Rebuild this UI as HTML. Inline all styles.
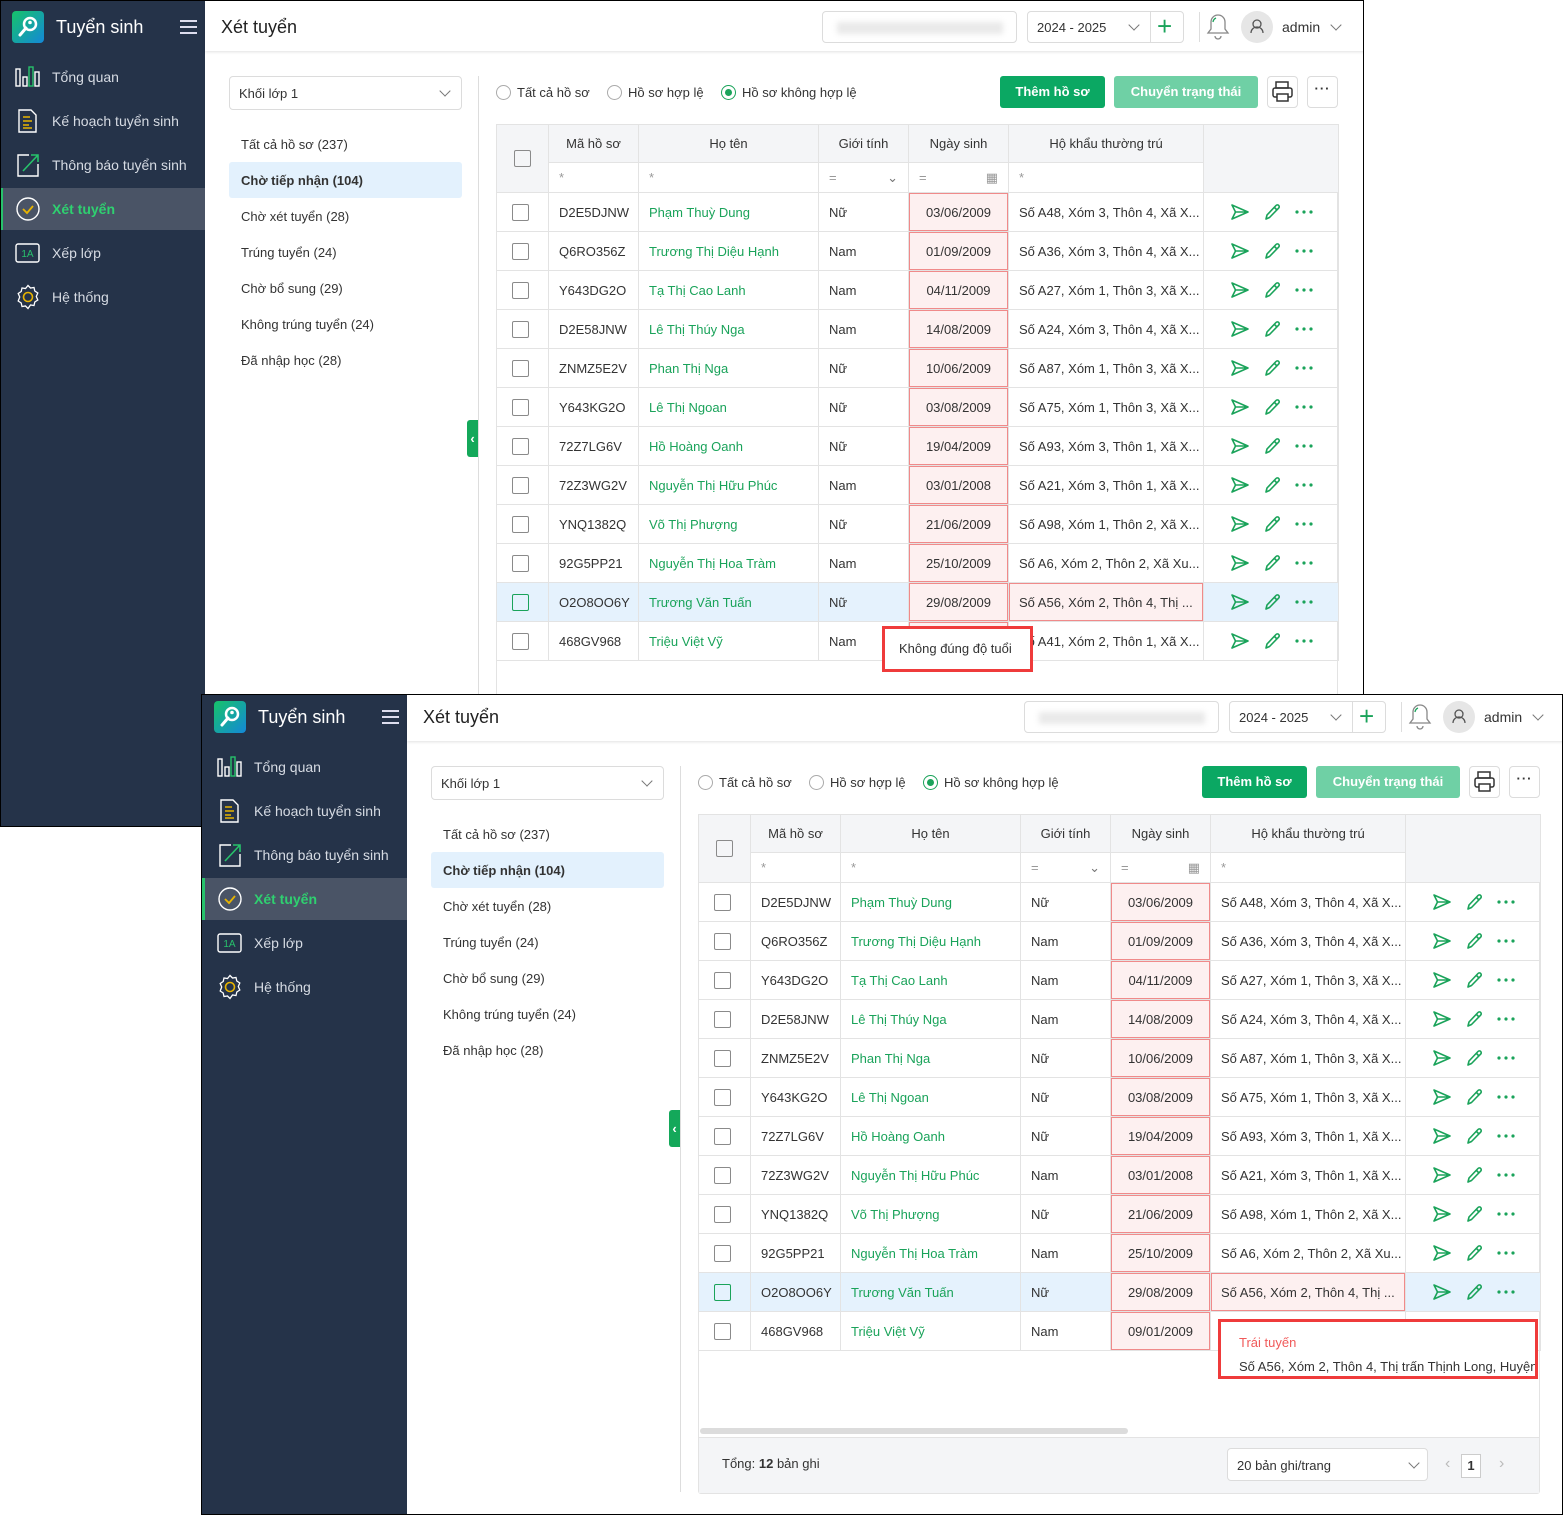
<!DOCTYPE html>
<html><head><meta charset="utf-8">
<style>
*{box-sizing:border-box;margin:0;padding:0}
body{width:1563px;height:1515px;background:#fff;position:relative;overflow:hidden;font-family:"Liberation Sans","DejaVu Sans",sans-serif;color:#333;font-size:13px}
.frame{position:absolute;border:1px solid #000;overflow:hidden;background:#fff}
.app{position:absolute;left:0;width:1362px;height:830px}
.abs{position:absolute}
.side{position:absolute;left:0;top:0;width:205px;height:900px;background:#253349}
.logo{position:absolute;left:12px;top:11px;width:32px;height:32px;border-radius:4px;background:linear-gradient(135deg,#16c36a,#1488d8)}
.brand{position:absolute;left:56px;top:17px;color:#fff;font-size:18px}
.hamb{position:absolute;left:180px;top:20px;width:17px;height:2px;background:#dde;box-shadow:0 6px 0 #dde,0 12px 0 #dde}
.mi{position:absolute;left:0;width:205px;height:42px;color:#d6dbe3;font-size:14px}
.mi span{position:absolute;left:52px;top:13px}
.mi svg{position:absolute;left:15px;top:8px}
.mi.act{background:#4a5466;border-left:3px solid #27c26b}
.mi.act span{color:#2fd070;font-weight:bold;left:49px}
.mi.act svg{left:12px}
.hdr{position:absolute;left:205px;top:0;width:1160px;height:51px;background:#fff;box-shadow:0 1px 3px rgba(0,0,0,.12)}
.title{position:absolute;left:221px;top:17px;font-size:18px;color:#222}
.box{position:absolute;border:1px solid #dcdcdc;border-radius:4px;background:#fff}
.chev{position:absolute;width:8px;height:8px;border-right:1.5px solid #777;border-bottom:1.5px solid #777;transform:rotate(45deg)}
.li{position:absolute;left:241px;font-size:13px;color:#333}
.radio{position:absolute;width:15px;height:15px;border:1px solid #aaa;border-radius:50%;top:85px}
.rl{position:absolute;top:85px;font-size:13px}
.btn{position:absolute;top:76px;height:32px;border-radius:3px;color:#fff;font-weight:bold;font-size:13px;text-align:center;line-height:32px}
.tc{position:absolute;left:496px;top:124px;width:842px;height:720px;border:1px solid #e3e3e3}
table{position:absolute;left:496px;top:124px;border-collapse:collapse;table-layout:fixed;width:842px}
td,th{border:1px solid #e3e3e3;height:39px;padding:0 10px;white-space:nowrap;overflow:hidden;font-size:13px;font-weight:normal;text-align:left}
th{background:#f4f5f7;height:38px;text-align:center;color:#333}
tr.f td{height:30px;color:#999;background:#fff}
.cb{display:inline-block;width:17px;height:17px;border:1px solid #8a8a8a;border-radius:2px;vertical-align:middle;margin-left:5px}
.nm{color:#1aa35a}
.dt{background:#fdf0f0;box-shadow:inset 0 0 0 1px #f08a8a;text-align:center}
tr.sel td{background:#e5f2fd}
tr.sel td.dt{background:#fdf0f0}
tr.sel .cb{border-color:#1aa35a}
td.a{padding-left:26px;font-size:0}
td.a svg{vertical-align:middle;margin-right:12px}
.tip{position:absolute;border:3px solid #ef3b3b;background:#fff;overflow:hidden;white-space:nowrap}
</style></head><body>
<svg width="0" height="0" style="position:absolute">
<defs>
<symbol id="snd" viewBox="0 0 20 18"><path d="M2 2l16 7-16 7 3.5-7z M5.5 9H18" fill="none" stroke="#1aa35a" stroke-width="1.6" stroke-linejoin="round"/></symbol>
<symbol id="pen" viewBox="0 0 20 18"><path d="M4 16l1-4 9-9.5a1.8 1.8 0 0 1 2.7 2.6L7.5 14.5z M12.5 4.5l2.5 2.5" fill="none" stroke="#1aa35a" stroke-width="1.6" stroke-linejoin="round"/></symbol>
<symbol id="dts" viewBox="0 0 20 18"><circle cx="3" cy="9" r="1.6" fill="#1aa35a"/><circle cx="10" cy="9" r="1.6" fill="#1aa35a"/><circle cx="17" cy="9" r="1.6" fill="#1aa35a"/></symbol>
</defs></svg>

<!-- APP 1 -->
<div class="frame" style="left:0;top:0;width:1364px;height:827px">
<div class="app" style="top:-1px;left:-1px">
 <div class="side">
  <div class="logo"><svg width="32" height="32" viewBox="0 0 32 32"><circle cx="18" cy="13" r="6" fill="none" stroke="#fff" stroke-width="2.5"/><line x1="14" y1="17" x2="8" y2="24" stroke="#fff" stroke-width="3" stroke-linecap="round"/><circle cx="18" cy="11.5" r="1.8" fill="#fff"/></svg></div>
  <div class="brand">Tuyển sinh</div><div class="hamb"></div>
  <div class="mi" style="top:56px"><svg width="26" height="26"><rect x="1" y="5" width="4" height="17" fill="none" stroke="#fff" stroke-width="1.4"/><rect x="8" y="13" width="4" height="9" fill="none" stroke="#fff" stroke-width="1.4"/><rect x="14" y="3" width="4" height="19" fill="none" stroke="#27c26b" stroke-width="1.4"/><rect x="20" y="8" width="4" height="14" fill="none" stroke="#fff" stroke-width="1.4"/></svg><span>Tổng quan</span></div>
  <div class="mi" style="top:100px"><svg width="26" height="26"><path d="M4 2h12l5 5v17H4z" fill="none" stroke="#fff" stroke-width="1.4"/><path d="M8 9h7M8 13h9M8 17h6M8 20h9" stroke="#e8b400" stroke-width="1.6"/></svg><span>Kế hoạch tuyển sinh</span></div>
  <div class="mi" style="top:144px"><svg width="26" height="26"><path d="M14 3H3v21h20V12" fill="none" stroke="#fff" stroke-width="1.4"/><path d="M8 19L23 3M16 3h7v7" fill="none" stroke="#27c26b" stroke-width="1.6"/></svg><span>Thông báo tuyển sinh</span></div>
  <div class="mi act" style="top:188px"><svg width="26" height="26"><circle cx="13" cy="13" r="11" fill="none" stroke="#fff" stroke-width="1.4"/><path d="M8 13l4 4 6-7" fill="none" stroke="#e8b400" stroke-width="1.8"/></svg><span>Xét tuyển</span></div>
  <div class="mi" style="top:232px"><svg width="26" height="26"><rect x="1" y="4" width="23" height="18" rx="2" fill="none" stroke="#fff" stroke-width="1.4"/><text x="12.5" y="17" fill="#27c26b" font-size="10" text-anchor="middle" font-family="Liberation Sans">1A</text></svg><span>Xếp lớp</span></div>
  <div class="mi" style="top:276px"><svg width="26" height="26"><path d="M13 1.5l2.5 2.5 3.5-.5.8 3.5 3 2-1.5 3.5 1.5 3.5-3 2-.8 3.5-3.5-.5L13 24.5l-2.5-2.5-3.5.5-.8-3.5-3-2L4.7 13 3.2 9.5l3-2L7 4l3.5.5z" fill="none" stroke="#fff" stroke-width="1.3"/><circle cx="13" cy="13" r="4.5" fill="none" stroke="#e8b400" stroke-width="1.6"/></svg><span>Hệ thống</span></div>
 </div>
 <div class="hdr"></div>
 <div class="title">Xét tuyển</div>
 <div class="box" style="left:822px;top:11px;width:195px;height:32px"><div class="abs" style="left:14px;top:10px;width:166px;height:12px;background:#e9e9e9;filter:blur(3px)"></div></div>
 <div class="box" style="left:1027px;top:11px;width:157px;height:32px"><span class="abs" style="left:9px;top:8px">2024 - 2025</span><div class="chev" style="left:102px;top:9px"></div><div class="abs" style="left:122px;top:0;width:1px;height:30px;background:#ddd"></div><span class="abs" style="left:129px;top:-1px;color:#1aa35a;font-size:26px;line-height:30px">+</span></div>
 <div class="abs" style="left:1199px;top:12px;width:1px;height:30px;background:#ddd"></div>
 <svg class="abs" style="left:1206px;top:12px" width="24" height="28"><path d="M12 3a7 7 0 0 0-7 7v7l-3 4h20l-3-4v-7a7 7 0 0 0-7-7z" fill="none" stroke="#888" stroke-width="1.3"/><path d="M9 24a3 3 0 0 0 6 0" fill="none" stroke="#888" stroke-width="1.3"/><path d="M7 10a5 5 0 0 1 3-4" stroke="#1aa35a" stroke-width="1.3" fill="none"/></svg>
 <div class="abs" style="left:1241px;top:11px;width:32px;height:32px;border-radius:50%;background:#e6e6e6"><svg width="32" height="32"><circle cx="16" cy="13" r="4" fill="none" stroke="#555" stroke-width="1.3"/><path d="M10 22a6 6 0 0 1 12 0" fill="none" stroke="#555" stroke-width="1.3"/></svg></div>
 <span class="abs" style="left:1282px;top:19px;font-size:14px">admin</span><div class="chev" style="left:1332px;top:21px"></div>

 <div class="box" style="left:229px;top:76px;width:233px;height:34px"><span class="abs" style="left:9px;top:9px">Khối lớp 1</span><div class="chev" style="left:211px;top:10px"></div></div>
 <div class="abs" style="left:229px;top:162px;width:233px;height:36px;background:#e3f1fd;border-radius:3px"></div>
 <div class="li" style="top:137px">Tất cả hồ sơ (237)</div>
 <div class="li" style="top:173px;font-weight:bold">Chờ tiếp nhận (104)</div>
 <div class="li" style="top:209px">Chờ xét tuyển (28)</div>
 <div class="li" style="top:245px">Trúng tuyển (24)</div>
 <div class="li" style="top:281px">Chờ bổ sung (29)</div>
 <div class="li" style="top:317px">Không trúng tuyển (24)</div>
 <div class="li" style="top:353px">Đã nhập học (28)</div>
 <div class="abs" style="left:478px;top:76px;width:1px;height:760px;background:#ddd"></div>
 <div class="abs" style="left:467px;top:420px;width:11px;height:37px;background:#14a85a;border-radius:3px 0 0 3px;color:#fff;font-size:13px;font-weight:bold;line-height:37px;text-align:center">‹</div>

 <div class="radio" style="left:496px"></div><span class="rl" style="left:517px">Tất cả hồ sơ</span>
 <div class="radio" style="left:607px"></div><span class="rl" style="left:628px">Hồ sơ hợp lệ</span>
 <div class="radio" style="left:721px;border-color:#1aa35a"><div class="abs" style="left:3px;top:3px;width:7px;height:7px;border-radius:50%;background:#1aa35a"></div></div><span class="rl" style="left:742px">Hồ sơ không hợp lệ</span>
 <div class="btn" style="left:1000px;width:105px;background:#0ba863">Thêm hồ sơ</div>
 <div class="btn" style="left:1114px;width:144px;background:#6fd0a5">Chuyển trạng thái</div>
 <div class="box" style="left:1267px;top:76px;width:31px;height:32px"><svg width="29" height="30"><rect x="8" y="5" width="12" height="6" fill="none" stroke="#333" stroke-width="1.5"/><rect x="5" y="11" width="19" height="9" rx="2" fill="none" stroke="#333" stroke-width="1.5"/><rect x="9" y="17" width="11" height="7" fill="#fff" stroke="#333" stroke-width="1.5"/></svg></div>
 <div class="box" style="left:1307px;top:76px;width:31px;height:32px;text-align:center;font-weight:bold;line-height:24px;letter-spacing:1px">···</div>

 <div class="tc"></div>
 <table>
  <colgroup><col style="width:52px"><col style="width:90px"><col style="width:180px"><col style="width:90px"><col style="width:100px"><col style="width:195px"><col style="width:135px"></colgroup>
  <tr><th rowspan="2"><span class="cb" style="margin:0"></span></th><th>Mã hồ sơ</th><th>Họ tên</th><th>Giới tính</th><th>Ngày sinh</th><th>Hộ khẩu thường trú</th><th rowspan="2"></th></tr>
  <tr class="f"><td>*</td><td>*</td><td>=<span style="float:right;color:#777">⌄</span></td><td>=<span style="float:right">▦</span></td><td>*</td></tr>
  <tr><td><span class="cb"></span></td><td>D2E5DJNW</td><td class="nm">Phạm Thuỳ Dung</td><td>Nữ</td><td class="dt">03/06/2009</td><td>Số A48, Xóm 3, Thôn 4, Xã X...</td><td class="a"><svg width="20" height="18"><use href="#snd"/></svg><svg width="20" height="18"><use href="#pen"/></svg><svg width="20" height="18"><use href="#dts"/></svg></td></tr>
  <tr><td><span class="cb"></span></td><td>Q6RO356Z</td><td class="nm">Trương Thị Diệu Hạnh</td><td>Nam</td><td class="dt">01/09/2009</td><td>Số A36, Xóm 3, Thôn 4, Xã X...</td><td class="a"><svg width="20" height="18"><use href="#snd"/></svg><svg width="20" height="18"><use href="#pen"/></svg><svg width="20" height="18"><use href="#dts"/></svg></td></tr>
  <tr><td><span class="cb"></span></td><td>Y643DG2O</td><td class="nm">Tạ Thị Cao Lanh</td><td>Nam</td><td class="dt">04/11/2009</td><td>Số A27, Xóm 1, Thôn 3, Xã X...</td><td class="a"><svg width="20" height="18"><use href="#snd"/></svg><svg width="20" height="18"><use href="#pen"/></svg><svg width="20" height="18"><use href="#dts"/></svg></td></tr>
  <tr><td><span class="cb"></span></td><td>D2E58JNW</td><td class="nm">Lê Thị Thúy Nga</td><td>Nam</td><td class="dt">14/08/2009</td><td>Số A24, Xóm 3, Thôn 4, Xã X...</td><td class="a"><svg width="20" height="18"><use href="#snd"/></svg><svg width="20" height="18"><use href="#pen"/></svg><svg width="20" height="18"><use href="#dts"/></svg></td></tr>
  <tr><td><span class="cb"></span></td><td>ZNMZ5E2V</td><td class="nm">Phan Thị Nga</td><td>Nữ</td><td class="dt">10/06/2009</td><td>Số A87, Xóm 1, Thôn 3, Xã X...</td><td class="a"><svg width="20" height="18"><use href="#snd"/></svg><svg width="20" height="18"><use href="#pen"/></svg><svg width="20" height="18"><use href="#dts"/></svg></td></tr>
  <tr><td><span class="cb"></span></td><td>Y643KG2O</td><td class="nm">Lê Thị Ngoan</td><td>Nữ</td><td class="dt">03/08/2009</td><td>Số A75, Xóm 1, Thôn 3, Xã X...</td><td class="a"><svg width="20" height="18"><use href="#snd"/></svg><svg width="20" height="18"><use href="#pen"/></svg><svg width="20" height="18"><use href="#dts"/></svg></td></tr>
  <tr><td><span class="cb"></span></td><td>72Z7LG6V</td><td class="nm">Hồ Hoàng Oanh</td><td>Nữ</td><td class="dt">19/04/2009</td><td>Số A93, Xóm 3, Thôn 1, Xã X...</td><td class="a"><svg width="20" height="18"><use href="#snd"/></svg><svg width="20" height="18"><use href="#pen"/></svg><svg width="20" height="18"><use href="#dts"/></svg></td></tr>
  <tr><td><span class="cb"></span></td><td>72Z3WG2V</td><td class="nm">Nguyễn Thị Hữu Phúc</td><td>Nam</td><td class="dt">03/01/2008</td><td>Số A21, Xóm 3, Thôn 1, Xã X...</td><td class="a"><svg width="20" height="18"><use href="#snd"/></svg><svg width="20" height="18"><use href="#pen"/></svg><svg width="20" height="18"><use href="#dts"/></svg></td></tr>
  <tr><td><span class="cb"></span></td><td>YNQ1382Q</td><td class="nm">Võ Thị Phượng</td><td>Nữ</td><td class="dt">21/06/2009</td><td>Số A98, Xóm 1, Thôn 2, Xã X...</td><td class="a"><svg width="20" height="18"><use href="#snd"/></svg><svg width="20" height="18"><use href="#pen"/></svg><svg width="20" height="18"><use href="#dts"/></svg></td></tr>
  <tr><td><span class="cb"></span></td><td>92G5PP21</td><td class="nm">Nguyễn Thị Hoa Tràm</td><td>Nam</td><td class="dt">25/10/2009</td><td>Số A6, Xóm 2, Thôn 2, Xã Xu...</td><td class="a"><svg width="20" height="18"><use href="#snd"/></svg><svg width="20" height="18"><use href="#pen"/></svg><svg width="20" height="18"><use href="#dts"/></svg></td></tr>
  <tr class="sel"><td><span class="cb"></span></td><td>O2O8OO6Y</td><td class="nm">Trương Văn Tuấn</td><td>Nữ</td><td class="dt">29/08/2009</td><td class="dt" style="text-align:left">Số A56, Xóm 2, Thôn 4, Thị ...</td><td class="a"><svg width="20" height="18"><use href="#snd"/></svg><svg width="20" height="18"><use href="#pen"/></svg><svg width="20" height="18"><use href="#dts"/></svg></td></tr>
  <tr><td><span class="cb"></span></td><td>468GV968</td><td class="nm">Triệu Việt Vỹ</td><td>Nam</td><td class="dt">09/01/2009</td><td>Số A41, Xóm 2, Thôn 1, Xã X...</td><td class="a"><svg width="20" height="18"><use href="#snd"/></svg><svg width="20" height="18"><use href="#pen"/></svg><svg width="20" height="18"><use href="#dts"/></svg></td></tr>
 </table>
 <div class="tip" style="left:882px;top:626px;width:151px;height:46px;padding:12px 0 0 14px">Không đúng độ tuổi</div>
</div></div>

<!-- APP 2 -->
<div class="frame" style="left:201px;top:694px;width:1362px;height:821px">
<div class="app" style="top:-5px;left:0">
 <div class="side">
  <div class="logo"><svg width="32" height="32" viewBox="0 0 32 32"><circle cx="18" cy="13" r="6" fill="none" stroke="#fff" stroke-width="2.5"/><line x1="14" y1="17" x2="8" y2="24" stroke="#fff" stroke-width="3" stroke-linecap="round"/><circle cx="18" cy="11.5" r="1.8" fill="#fff"/></svg></div>
  <div class="brand">Tuyển sinh</div><div class="hamb"></div>
  <div class="mi" style="top:56px"><svg width="26" height="26"><rect x="1" y="5" width="4" height="17" fill="none" stroke="#fff" stroke-width="1.4"/><rect x="8" y="13" width="4" height="9" fill="none" stroke="#fff" stroke-width="1.4"/><rect x="14" y="3" width="4" height="19" fill="none" stroke="#27c26b" stroke-width="1.4"/><rect x="20" y="8" width="4" height="14" fill="none" stroke="#fff" stroke-width="1.4"/></svg><span>Tổng quan</span></div>
  <div class="mi" style="top:100px"><svg width="26" height="26"><path d="M4 2h12l5 5v17H4z" fill="none" stroke="#fff" stroke-width="1.4"/><path d="M8 9h7M8 13h9M8 17h6M8 20h9" stroke="#e8b400" stroke-width="1.6"/></svg><span>Kế hoạch tuyển sinh</span></div>
  <div class="mi" style="top:144px"><svg width="26" height="26"><path d="M14 3H3v21h20V12" fill="none" stroke="#fff" stroke-width="1.4"/><path d="M8 19L23 3M16 3h7v7" fill="none" stroke="#27c26b" stroke-width="1.6"/></svg><span>Thông báo tuyển sinh</span></div>
  <div class="mi act" style="top:188px"><svg width="26" height="26"><circle cx="13" cy="13" r="11" fill="none" stroke="#fff" stroke-width="1.4"/><path d="M8 13l4 4 6-7" fill="none" stroke="#e8b400" stroke-width="1.8"/></svg><span>Xét tuyển</span></div>
  <div class="mi" style="top:232px"><svg width="26" height="26"><rect x="1" y="4" width="23" height="18" rx="2" fill="none" stroke="#fff" stroke-width="1.4"/><text x="12.5" y="17" fill="#27c26b" font-size="10" text-anchor="middle" font-family="Liberation Sans">1A</text></svg><span>Xếp lớp</span></div>
  <div class="mi" style="top:276px"><svg width="26" height="26"><path d="M13 1.5l2.5 2.5 3.5-.5.8 3.5 3 2-1.5 3.5 1.5 3.5-3 2-.8 3.5-3.5-.5L13 24.5l-2.5-2.5-3.5.5-.8-3.5-3-2L4.7 13 3.2 9.5l3-2L7 4l3.5.5z" fill="none" stroke="#fff" stroke-width="1.3"/><circle cx="13" cy="13" r="4.5" fill="none" stroke="#e8b400" stroke-width="1.6"/></svg><span>Hệ thống</span></div>
 </div>
 <div class="hdr"></div>
 <div class="title">Xét tuyển</div>
 <div class="box" style="left:822px;top:11px;width:195px;height:32px"><div class="abs" style="left:14px;top:10px;width:166px;height:12px;background:#e9e9e9;filter:blur(3px)"></div></div>
 <div class="box" style="left:1027px;top:11px;width:157px;height:32px"><span class="abs" style="left:9px;top:8px">2024 - 2025</span><div class="chev" style="left:102px;top:9px"></div><div class="abs" style="left:122px;top:0;width:1px;height:30px;background:#ddd"></div><span class="abs" style="left:129px;top:-1px;color:#1aa35a;font-size:26px;line-height:30px">+</span></div>
 <div class="abs" style="left:1199px;top:12px;width:1px;height:30px;background:#ddd"></div>
 <svg class="abs" style="left:1206px;top:12px" width="24" height="28"><path d="M12 3a7 7 0 0 0-7 7v7l-3 4h20l-3-4v-7a7 7 0 0 0-7-7z" fill="none" stroke="#888" stroke-width="1.3"/><path d="M9 24a3 3 0 0 0 6 0" fill="none" stroke="#888" stroke-width="1.3"/><path d="M7 10a5 5 0 0 1 3-4" stroke="#1aa35a" stroke-width="1.3" fill="none"/></svg>
 <div class="abs" style="left:1241px;top:11px;width:32px;height:32px;border-radius:50%;background:#e6e6e6"><svg width="32" height="32"><circle cx="16" cy="13" r="4" fill="none" stroke="#555" stroke-width="1.3"/><path d="M10 22a6 6 0 0 1 12 0" fill="none" stroke="#555" stroke-width="1.3"/></svg></div>
 <span class="abs" style="left:1282px;top:19px;font-size:14px">admin</span><div class="chev" style="left:1332px;top:21px"></div>

 <div class="box" style="left:229px;top:76px;width:233px;height:34px"><span class="abs" style="left:9px;top:9px">Khối lớp 1</span><div class="chev" style="left:211px;top:10px"></div></div>
 <div class="abs" style="left:229px;top:162px;width:233px;height:36px;background:#e3f1fd;border-radius:3px"></div>
 <div class="li" style="top:137px">Tất cả hồ sơ (237)</div>
 <div class="li" style="top:173px;font-weight:bold">Chờ tiếp nhận (104)</div>
 <div class="li" style="top:209px">Chờ xét tuyển (28)</div>
 <div class="li" style="top:245px">Trúng tuyển (24)</div>
 <div class="li" style="top:281px">Chờ bổ sung (29)</div>
 <div class="li" style="top:317px">Không trúng tuyển (24)</div>
 <div class="li" style="top:353px">Đã nhập học (28)</div>
 <div class="abs" style="left:478px;top:76px;width:1px;height:726px;background:#ddd"></div>
 <div class="abs" style="left:467px;top:420px;width:11px;height:37px;background:#14a85a;border-radius:3px 0 0 3px;color:#fff;font-size:13px;font-weight:bold;line-height:37px;text-align:center">‹</div>

 <div class="radio" style="left:496px"></div><span class="rl" style="left:517px">Tất cả hồ sơ</span>
 <div class="radio" style="left:607px"></div><span class="rl" style="left:628px">Hồ sơ hợp lệ</span>
 <div class="radio" style="left:721px;border-color:#1aa35a"><div class="abs" style="left:3px;top:3px;width:7px;height:7px;border-radius:50%;background:#1aa35a"></div></div><span class="rl" style="left:742px">Hồ sơ không hợp lệ</span>
 <div class="btn" style="left:1000px;width:105px;background:#0ba863">Thêm hồ sơ</div>
 <div class="btn" style="left:1114px;width:144px;background:#6fd0a5">Chuyển trạng thái</div>
 <div class="box" style="left:1267px;top:76px;width:31px;height:32px"><svg width="29" height="30"><rect x="8" y="5" width="12" height="6" fill="none" stroke="#333" stroke-width="1.5"/><rect x="5" y="11" width="19" height="9" rx="2" fill="none" stroke="#333" stroke-width="1.5"/><rect x="9" y="17" width="11" height="7" fill="#fff" stroke="#333" stroke-width="1.5"/></svg></div>
 <div class="box" style="left:1307px;top:76px;width:31px;height:32px;text-align:center;font-weight:bold;line-height:24px;letter-spacing:1px">···</div>

 <div class="tc" style="height:680px;border-radius:3px"></div>
 <div class="abs" style="left:498px;top:738px;width:428px;height:6px;border-radius:3px;background:#dcdcdc"></div>
 <div class="abs" style="left:497px;top:747px;width:840px;height:56px;background:#f4f5f7;border-top:1px solid #e3e3e3"></div>
 <div class="abs" style="left:520px;top:766px">Tổng: <b>12</b> bản ghi</div>
 <div class="box" style="left:1025px;top:758px;width:201px;height:33px"><span class="abs" style="left:9px;top:9px">20 bản ghi/trang</span><div class="chev" style="left:182px;top:10px"></div></div>
 <div class="abs" style="left:1243px;top:765px;color:#bbb;font-size:16px">‹</div>
 <div class="abs" style="left:1259px;top:764px;width:20px;height:24px;border:1px solid #ccc;background:#fff;text-align:center;line-height:22px;font-weight:bold">1</div>
 <div class="abs" style="left:1297px;top:765px;color:#bbb;font-size:16px">›</div>

 <table>
  <colgroup><col style="width:52px"><col style="width:90px"><col style="width:180px"><col style="width:90px"><col style="width:100px"><col style="width:195px"><col style="width:135px"></colgroup>
  <tr><th rowspan="2"><span class="cb" style="margin:0"></span></th><th>Mã hồ sơ</th><th>Họ tên</th><th>Giới tính</th><th>Ngày sinh</th><th>Hộ khẩu thường trú</th><th rowspan="2"></th></tr>
  <tr class="f"><td>*</td><td>*</td><td>=<span style="float:right;color:#777">⌄</span></td><td>=<span style="float:right">▦</span></td><td>*</td></tr>
  <tr><td><span class="cb"></span></td><td>D2E5DJNW</td><td class="nm">Phạm Thuỳ Dung</td><td>Nữ</td><td class="dt">03/06/2009</td><td>Số A48, Xóm 3, Thôn 4, Xã X...</td><td class="a"><svg width="20" height="18"><use href="#snd"/></svg><svg width="20" height="18"><use href="#pen"/></svg><svg width="20" height="18"><use href="#dts"/></svg></td></tr>
  <tr><td><span class="cb"></span></td><td>Q6RO356Z</td><td class="nm">Trương Thị Diệu Hạnh</td><td>Nam</td><td class="dt">01/09/2009</td><td>Số A36, Xóm 3, Thôn 4, Xã X...</td><td class="a"><svg width="20" height="18"><use href="#snd"/></svg><svg width="20" height="18"><use href="#pen"/></svg><svg width="20" height="18"><use href="#dts"/></svg></td></tr>
  <tr><td><span class="cb"></span></td><td>Y643DG2O</td><td class="nm">Tạ Thị Cao Lanh</td><td>Nam</td><td class="dt">04/11/2009</td><td>Số A27, Xóm 1, Thôn 3, Xã X...</td><td class="a"><svg width="20" height="18"><use href="#snd"/></svg><svg width="20" height="18"><use href="#pen"/></svg><svg width="20" height="18"><use href="#dts"/></svg></td></tr>
  <tr><td><span class="cb"></span></td><td>D2E58JNW</td><td class="nm">Lê Thị Thúy Nga</td><td>Nam</td><td class="dt">14/08/2009</td><td>Số A24, Xóm 3, Thôn 4, Xã X...</td><td class="a"><svg width="20" height="18"><use href="#snd"/></svg><svg width="20" height="18"><use href="#pen"/></svg><svg width="20" height="18"><use href="#dts"/></svg></td></tr>
  <tr><td><span class="cb"></span></td><td>ZNMZ5E2V</td><td class="nm">Phan Thị Nga</td><td>Nữ</td><td class="dt">10/06/2009</td><td>Số A87, Xóm 1, Thôn 3, Xã X...</td><td class="a"><svg width="20" height="18"><use href="#snd"/></svg><svg width="20" height="18"><use href="#pen"/></svg><svg width="20" height="18"><use href="#dts"/></svg></td></tr>
  <tr><td><span class="cb"></span></td><td>Y643KG2O</td><td class="nm">Lê Thị Ngoan</td><td>Nữ</td><td class="dt">03/08/2009</td><td>Số A75, Xóm 1, Thôn 3, Xã X...</td><td class="a"><svg width="20" height="18"><use href="#snd"/></svg><svg width="20" height="18"><use href="#pen"/></svg><svg width="20" height="18"><use href="#dts"/></svg></td></tr>
  <tr><td><span class="cb"></span></td><td>72Z7LG6V</td><td class="nm">Hồ Hoàng Oanh</td><td>Nữ</td><td class="dt">19/04/2009</td><td>Số A93, Xóm 3, Thôn 1, Xã X...</td><td class="a"><svg width="20" height="18"><use href="#snd"/></svg><svg width="20" height="18"><use href="#pen"/></svg><svg width="20" height="18"><use href="#dts"/></svg></td></tr>
  <tr><td><span class="cb"></span></td><td>72Z3WG2V</td><td class="nm">Nguyễn Thị Hữu Phúc</td><td>Nam</td><td class="dt">03/01/2008</td><td>Số A21, Xóm 3, Thôn 1, Xã X...</td><td class="a"><svg width="20" height="18"><use href="#snd"/></svg><svg width="20" height="18"><use href="#pen"/></svg><svg width="20" height="18"><use href="#dts"/></svg></td></tr>
  <tr><td><span class="cb"></span></td><td>YNQ1382Q</td><td class="nm">Võ Thị Phượng</td><td>Nữ</td><td class="dt">21/06/2009</td><td>Số A98, Xóm 1, Thôn 2, Xã X...</td><td class="a"><svg width="20" height="18"><use href="#snd"/></svg><svg width="20" height="18"><use href="#pen"/></svg><svg width="20" height="18"><use href="#dts"/></svg></td></tr>
  <tr><td><span class="cb"></span></td><td>92G5PP21</td><td class="nm">Nguyễn Thị Hoa Tràm</td><td>Nam</td><td class="dt">25/10/2009</td><td>Số A6, Xóm 2, Thôn 2, Xã Xu...</td><td class="a"><svg width="20" height="18"><use href="#snd"/></svg><svg width="20" height="18"><use href="#pen"/></svg><svg width="20" height="18"><use href="#dts"/></svg></td></tr>
  <tr class="sel"><td><span class="cb"></span></td><td>O2O8OO6Y</td><td class="nm">Trương Văn Tuấn</td><td>Nữ</td><td class="dt">29/08/2009</td><td class="dt" style="text-align:left">Số A56, Xóm 2, Thôn 4, Thị ...</td><td class="a"><svg width="20" height="18"><use href="#snd"/></svg><svg width="20" height="18"><use href="#pen"/></svg><svg width="20" height="18"><use href="#dts"/></svg></td></tr>
  <tr><td><span class="cb"></span></td><td>468GV968</td><td class="nm">Triệu Việt Vỹ</td><td>Nam</td><td class="dt">09/01/2009</td><td>Số A41, Xóm 2, Thôn 1, Xã X...</td><td class="a"><svg width="20" height="18"><use href="#snd"/></svg><svg width="20" height="18"><use href="#pen"/></svg><svg width="20" height="18"><use href="#dts"/></svg></td></tr>
 </table>
 <div class="tip" style="left:1016px;top:629px;width:320px;height:60px;padding:9px 0 0 18px;line-height:24px"><div style="color:#f05a5a">Trái tuyến</div><div>Số A56, Xóm 2, Thôn 4, Thị trấn Thịnh Long, Huyện Hải Hậu</div></div>
</div></div>

</body></html>
